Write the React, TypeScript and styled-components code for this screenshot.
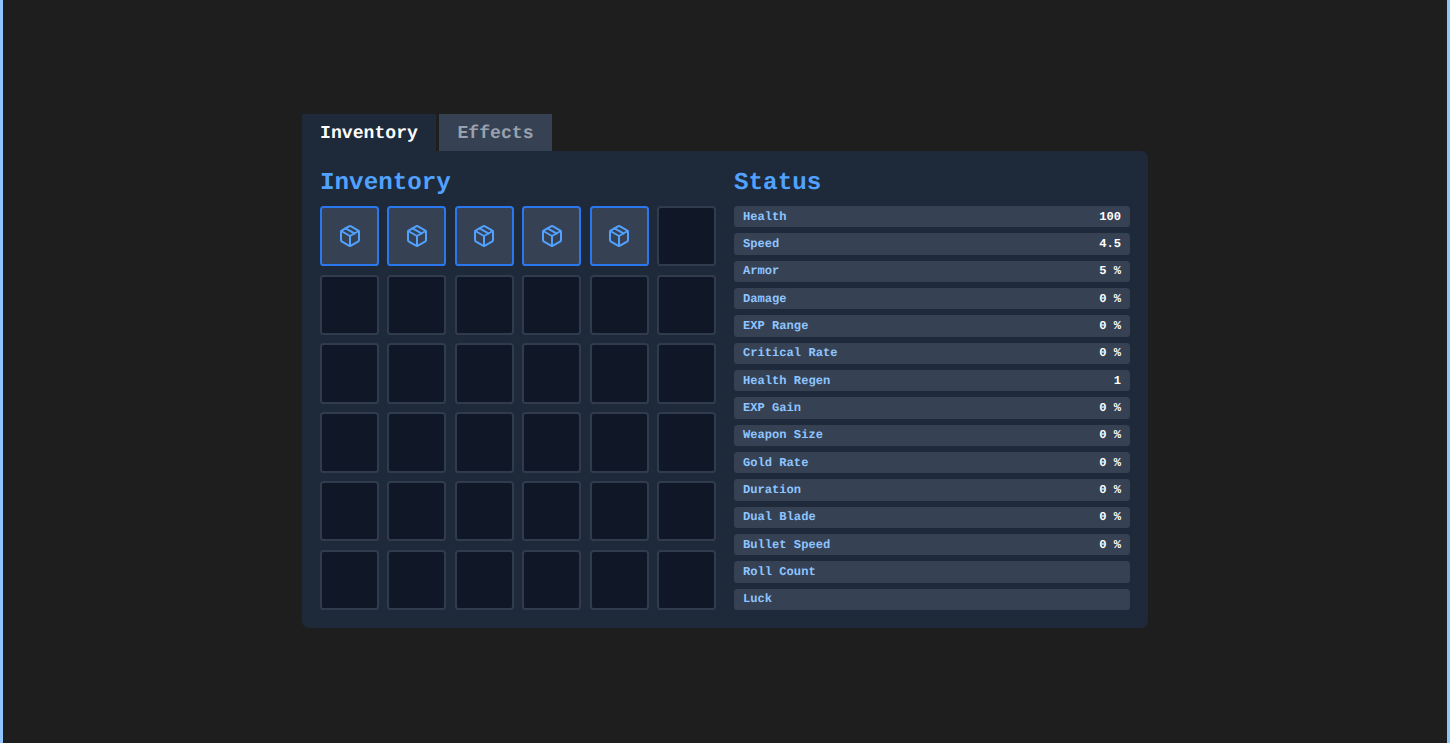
import React from "react";
import styled, { createGlobalStyle } from "styled-components";
import { Package } from "lucide-react";

const Global = createGlobalStyle`
  html, body { margin: 0; padding: 0; height: 100%; }
  #root { height: 100%; }
  body {
    font-family: "Liberation Mono", monospace;
    background: #1e1e1e;
    text-rendering: geometricPrecision;
  }
`;

const Page = styled.div`
  box-sizing: border-box;
  height: 743px;
  border-left: 3px solid #8ec5ff;
  border-right: 3px solid #8ec5ff;
  display: flex;
  align-items: center;
  justify-content: center;
  background: #1e1e1e;
  overflow: hidden;
`;

const Shell = styled.div`
  zoom: 1.2;
  width: 705px;
  flex: none;
  margin-bottom: 0.8px;
  display: flex;
  flex-direction: column;
`;

const Tabs = styled.div`
  display: flex;
  gap: 2.5px;
  height: 30.83px;
`;

const Tab = styled.div<{ $active?: boolean; $w: number }>`
  width: ${(p) => p.$w}px;
  box-sizing: border-box;
  display: flex;
  align-items: center;
  justify-content: center;
  padding-top: 1.8px;
  font-size: 15.1px;
  font-weight: 700;
  color: ${(p) => (p.$active ? "#ffffff" : "#99a1af")};
  background: ${(p) => (p.$active ? "#1e2939" : "#364153")};
`;

const Panel = styled.div`
  box-sizing: border-box;
  height: 397.5px;
  padding: 15px;
  background: #1e2939;
  border-radius: 0 6px 6px 6px;
  display: grid;
  grid-template-columns: 330px 330px;
  column-gap: 15px;
`;

const Column = styled.section`
  display: flex;
  flex-direction: column;
  min-height: 0;
`;

const Heading = styled.h2`
  margin: 0 0 8.33px;
  height: 22.5px;
  line-height: 25px;
  font-size: 20.2px;
  font-weight: 700;
  color: #51a2ff;
`;

const SlotGrid = styled.div`
  flex: 1;
  display: grid;
  grid-template-columns: repeat(6, 1fr);
  grid-template-rows: repeat(6, 1fr);
  gap: 7px;
`;

const Slot = styled.div<{ $filled?: boolean }>`
  box-sizing: border-box;
  display: flex;
  align-items: center;
  justify-content: center;
  border-radius: 3px;
  border: 2px solid ${(p) => (p.$filled ? "#2a78ee" : "#303b4d")};
  background: ${(p) => (p.$filled ? "#364153" : "#101828")};
  color: #51a2ff;
`;

const StatList = styled.div`
  flex: 1;
  display: grid;
  grid-template-rows: repeat(15, 1fr);
  gap: 5px;
`;

const StatRow = styled.div`
  display: flex;
  align-items: center;
  justify-content: space-between;
  padding: 0 7.5px;
  border-radius: 3px;
  background: #364153;
  font-size: 10.1px;
  font-weight: 700;
`;

const StatName = styled.span`
  color: #8ec5ff;
`;

const StatValue = styled.span`
  color: #ffffff;
`;

const stats: [string, string][] = [
  ["Health", "100"],
  ["Speed", "4.5"],
  ["Armor", "5 %"],
  ["Damage", "0 %"],
  ["EXP Range", "0 %"],
  ["Critical Rate", "0 %"],
  ["Health Regen", "1"],
  ["EXP Gain", "0 %"],
  ["Weapon Size", "0 %"],
  ["Gold Rate", "0 %"],
  ["Duration", "0 %"],
  ["Dual Blade", "0 %"],
  ["Bullet Speed", "0 %"],
  ["Roll Count", ""],
  ["Luck", ""],
];

export default function App() {
  return (
    <Page>
      <Global />
      <Shell>
        <Tabs>
          <Tab $active $w={111.67}>Inventory</Tab>
          <Tab $w={94.17}>Effects</Tab>
        </Tabs>
        <Panel>
          <Column>
            <Heading>Inventory</Heading>
            <SlotGrid>
              {Array.from({ length: 36 }, (_, i) => (
                <Slot key={i} $filled={i < 5}>
                  {i < 5 && <Package size={20} strokeWidth={2} />}
                </Slot>
              ))}
            </SlotGrid>
          </Column>
          <Column>
            <Heading>Status</Heading>
            <StatList>
              {stats.map(([name, value]) => (
                <StatRow key={name}>
                  <StatName>{name}</StatName>
                  <StatValue>{value}</StatValue>
                </StatRow>
              ))}
            </StatList>
          </Column>
        </Panel>
      </Shell>
    </Page>
  );
}
